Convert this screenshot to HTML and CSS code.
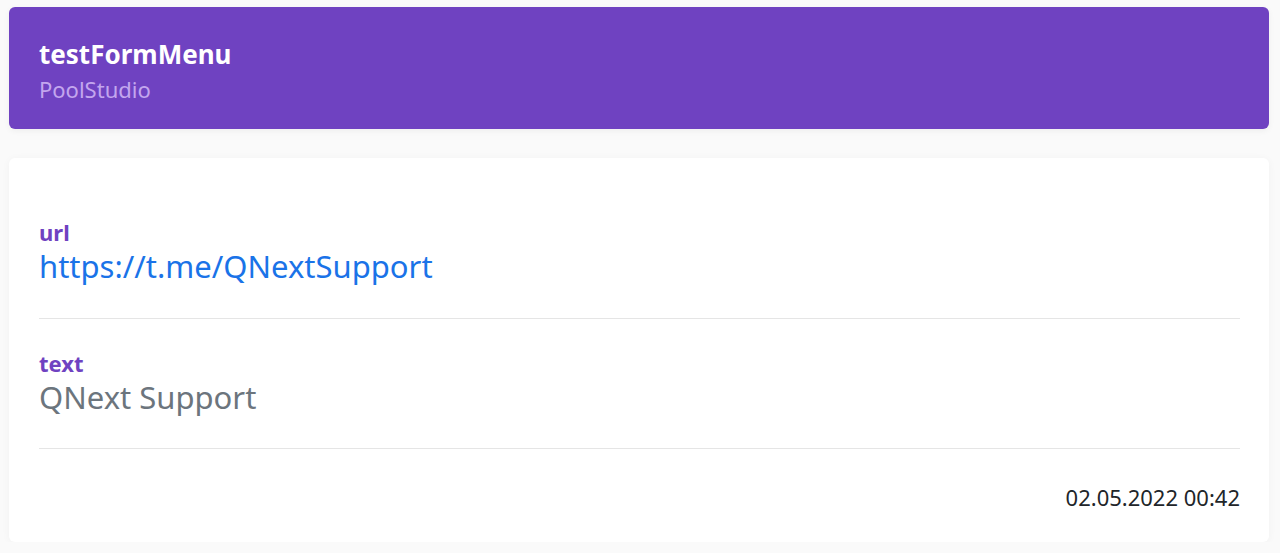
FILE: index.html
```html
<!DOCTYPE html>
<html>
<head>
<meta charset="utf-8">
<link rel="stylesheet" href="styles.css">
</head>
<body>
<div class="page">
  <header class="head">
    <div class="title">testFormMenu</div>
    <div class="subtitle">PoolStudio</div>
  </header>
  <section class="card">
    <div class="field">
      <div class="label">url</div>
      <a class="value link" href="#">https://t.me/QNextSupport</a>
    </div>
    <div class="field">
      <div class="label">text</div>
      <div class="value">QNext Support</div>
    </div>
    <div class="date">02.05.2022 00:42</div>
  </section>
</div>
</body>
</html>
```
FILE: styles.css
```css
html, body { margin: 0; padding: 0; }
body {
  background: #fafafa;
  font-family: "Noto Sans", "Open Sans", sans-serif;
  color: #212529;
}
.page {
  padding: 7px 11px 0 9px;
  display: flex;
  flex-direction: column;
  gap: 29px;
}
.head {
  background: #6f42c1;
  border-radius: 6px;
  height: 122px;
  box-sizing: border-box;
  padding: 32px 30px 0;
  box-shadow: 0 2px 6px rgba(0,0,0,0.05);
}
.title {
  color: #fff;
  font-weight: 700;
  font-size: 26px;
  line-height: 31px;
}
.subtitle {
  color: #c3a6ee;
  font-size: 22px;
  line-height: 26px;
  margin-top: 6px;
}
.card {
  background: #fff;
  border-radius: 6px;
  box-shadow: 0 1px 8px rgba(0,0,0,0.04);
  padding: 0 29px 0 30px;
  height: 384px;
  box-sizing: border-box;
}
.field {
  border-bottom: 1px solid #e5e5e5;
  padding: 61px 0 33px;
  display: flex;
  flex-direction: column;
}
.field + .field { padding: 31px 0 32px; }
.label {
  color: #6f42c1;
  font-weight: 700;
  font-size: 22px;
  line-height: 26px;
}
.value {
  font-size: 31px;
  line-height: 38px;
  margin-top: 2px;
  color: #6c757d;
}
.link {
  color: #1a73e8;
  text-decoration: none;
}
.date {
  text-align: right;
  font-size: 22px;
  line-height: 26px;
  padding-top: 35px;
  color: #212529;
}
```
